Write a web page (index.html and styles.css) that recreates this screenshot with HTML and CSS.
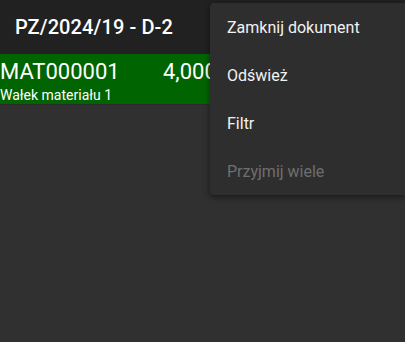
FILE: index.html
```html
<!DOCTYPE html>
<html>
<head>
<meta charset="utf-8">
<link rel="stylesheet" href="styles.css">
</head>
<body>
<div class="app">
  <header class="appbar"><span class="title">PZ/2024/19 - D-2</span></header>
  <div class="row">
    <div class="row-top"><span class="code">MAT000001</span><span class="qty">4,000</span></div>
    <div class="name">Wałek materiału 1</div>
  </div>
  <div class="menu">
    <div class="item">Zamknij dokument</div>
    <div class="item">Odśwież</div>
    <div class="item">Filtr</div>
    <div class="item disabled">Przyjmij wiele</div>
  </div>
</div>
</body>
</html>
```
FILE: styles.css
```css
html, body { margin: 0; padding: 0; }
body { background: #303030; font-family: Roboto, "Noto Sans", sans-serif; color: #fff; }
.app { position: relative; width: 405px; height: 342px; overflow: hidden; background: #303030; }
.appbar { height: 54px; background: #212121; display: flex; align-items: center; padding-left: 15px; }
.title { font-size: 20px; font-weight: 500; letter-spacing: 0.1px; }
.row { background: #006400; height: 51px; border-bottom: 1px solid #2a2a2a; box-sizing: border-box; padding-top: 6px; }
.row-top { display: flex; font-size: 22px; line-height: 24px; }
.code { width: 163px; }
.name { font-size: 14px; line-height: 16px; margin-top: 3px; }
.menu { position: absolute; left: 210px; top: 3px; width: 195px; background: #2e2e2e; box-shadow: 0 2px 6px rgba(0,0,0,0.5); border-radius: 4px 0 0 4px; }
.item { height: 48px; display: flex; align-items: center; padding-left: 17px; font-size: 16px; color: #f2f2f2; }
.item.disabled { color: #6e6e6e; }
```
